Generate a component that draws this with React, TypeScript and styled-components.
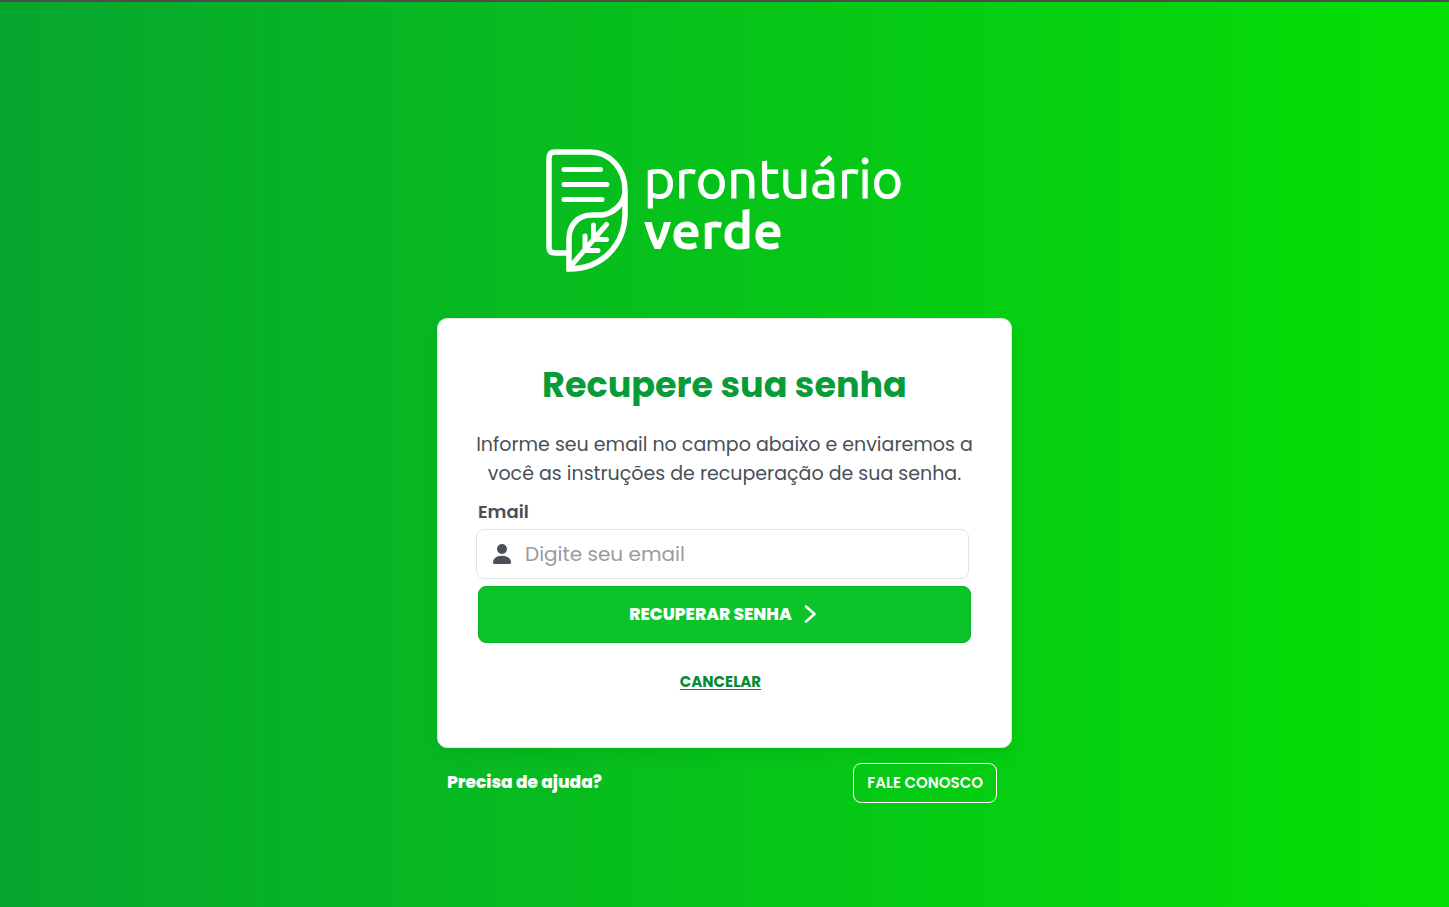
import React from "react";
import styled, { createGlobalStyle } from "styled-components";

const GlobalStyle = createGlobalStyle`
  * { box-sizing: border-box; }
  body {
    margin: 0;
    font-family: Poppins, Inter, "Liberation Sans", sans-serif;
    color: #495057;
  }
`;

const Page = styled.main`
  min-height: 100vh;
  display: flex;
  flex-direction: column;
  align-items: center;
  padding: 147px 16px 104px;
  border-top: 2px solid #4d4d4d;
  background: linear-gradient(90deg, #07a62f 0%, #05e004 100%);
`;

const Brand = styled.div`
  display: flex;
  gap: 16px;
  color: #fff;
`;

const BrandMark = styled.svg`
  width: 82px;
  height: 123px;
  flex: none;
`;

const BrandName = styled.div`
  display: flex;
  flex-direction: column;
  padding-top: 3px;
  font-family: Ubuntu, "Noto Sans", "Open Sans", sans-serif;
  font-size: 54px;
  line-height: 52px;
  font-weight: 400;
  -webkit-text-stroke: 1px currentColor;
`;

const BrandStrong = styled.span`
  font-size: 52px;
  font-weight: 700;
  -webkit-text-stroke: 0;
`;

const Card = styled.section`
  width: 100%;
  max-width: 575px;
  margin-top: 46px;
  padding: 41px 32px 53px;
  display: flex;
  flex-direction: column;
  background: #fff;
  border: 1px solid #dfe6df;
  border-radius: 10px;
  box-shadow: 0 8px 16px rgba(0, 0, 0, 0.06);
`;

const Title = styled.h1`
  margin: 0;
  font-size: 35px;
  line-height: 50px;
  font-weight: 700;
  text-align: center;
  color: #089c38;
`;

const Intro = styled.p`
  margin: 20px 0 0;
  font-size: 19px;
  line-height: 29px;
  text-align: center;
`;

const Form = styled.form`
  display: flex;
  flex-direction: column;
  padding: 0 8px;
`;

const Label = styled.label`
  margin-top: 10px;
  font-size: 18px;
  line-height: 28px;
  font-weight: 600;
`;

const Field = styled.div`
  display: flex;
  align-items: center;
  gap: 14px;
  height: 50px;
  margin: 3px 2px 0 -2px;
  padding: 0 16px;
  border: 1px solid #e3e4e6;
  border-radius: 8px;
`;

const FieldIcon = styled.svg`
  width: 18px;
  height: 20px;
  flex: none;
`;

const Input = styled.input`
  flex: 1;
  min-width: 0;
  padding: 0;
  border: 0;
  outline: 0;
  background: transparent;
  font: inherit;
  font-size: 20px;
  color: #495057;
  &::placeholder { color: #999b9f; opacity: 1; }
`;

const Submit = styled.button`
  display: flex;
  align-items: center;
  justify-content: center;
  gap: 12px;
  height: 57px;
  margin-top: 7px;
  padding: 0 4px 2px 0;
  border: 1px solid #08b427;
  border-radius: 8px;
  background: #0ac42a;
  color: #fff;
  font: inherit;
  font-size: 17px;
  font-weight: 800;
`;

const Chevron = styled.svg`
  width: 12px;
  height: 18px;
`;

const Cancel = styled.a`
  align-self: center;
  margin: 27px 8px 0 0;
  font-size: 15px;
  line-height: 24px;
  font-weight: 700;
  color: #078a35;
  text-underline-offset: 2px;
`;

const Help = styled.footer`
  width: 100%;
  max-width: 575px;
  margin-top: 15px;
  padding: 0 15px 0 10px;
  display: flex;
  align-items: center;
  justify-content: space-between;
  color: #fff;
`;

const HelpText = styled.span`
  font-size: 17px;
  line-height: 28px;
  padding-bottom: 2px;
  font-weight: 800;
`;

const Contact = styled.button`
  height: 40px;
  padding: 0 13px 2px;
  border: 1px solid #fff;
  border-radius: 8px;
  background: transparent;
  color: #fff;
  font: inherit;
  font-size: 15px;
  font-weight: 600;
`;

export default function App() {
  return (
    <>
      <GlobalStyle />
      <Page>
        <Brand>
          <BrandMark viewBox="0 0 82 123" fill="none" stroke="currentColor" strokeWidth="5.500" aria-hidden="true">
            <path d="M23 104H9q-6 0-6-6V9q0-6 6-6h35c20 0 35 17 35 38v23c0 32-23 56-56 56V90c0-14 9-24 23-24 8 0 13 1 19-3 8-4 14-12 14-22" />
            <path strokeLinecap="round" strokeWidth="5" d="M18 20.500h36.500M18 35.500h43M18 50.500h38" />
            <path strokeLinecap="round" strokeLinejoin="round" strokeWidth="5" d="M24 118 60.500 75.500M47.500 76v14.500h13M39 87v14.500h13" />
          </BrandMark>
          <BrandName>
            <span>prontuário</span>
            <BrandStrong>verde</BrandStrong>
          </BrandName>
        </Brand>
        <Card>
          <Title>Recupere sua senha</Title>
          <Intro>
            Informe seu email no campo abaixo e enviaremos a
            <br />
            você as instruções de recuperação de sua senha.
          </Intro>
          <Form onSubmit={(e: React.FormEvent) => e.preventDefault()}>
            <Label htmlFor="email">Email</Label>
            <Field>
              <FieldIcon viewBox="0 0 18 20" fill="currentColor" aria-hidden="true">
                <circle cx="9" cy="5" r="5" />
                <path d="M0 18.500C0 14.500 3.500 11.700 9 11.700s9 2.800 9 6.800q0 1.500-1.500 1.500h-15Q0 20 0 18.500Z" />
              </FieldIcon>
              <Input id="email" type="email" placeholder="Digite seu email" />
            </Field>
            <Submit type="submit">
              RECUPERAR SENHA
              <Chevron viewBox="0 0 12 18" fill="none" stroke="currentColor" strokeWidth="2.500" strokeLinecap="round" strokeLinejoin="round" aria-hidden="true">
                <path d="M2 1.500 10.500 9 2 16.500" />
              </Chevron>
            </Submit>
          </Form>
          <Cancel href="#">CANCELAR</Cancel>
        </Card>
        <Help>
          <HelpText>Precisa de ajuda?</HelpText>
          <Contact type="button">FALE CONOSCO</Contact>
        </Help>
      </Page>
    </>
  );
}
